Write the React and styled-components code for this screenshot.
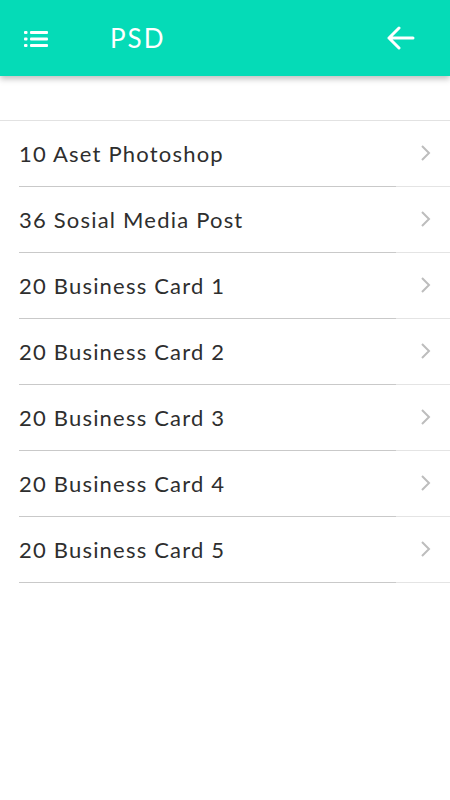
import React from 'react'
import styled, { createGlobalStyle } from 'styled-components'

const items = [
  '10 Aset Photoshop',
  '36 Sosial Media Post',
  '20 Business Card 1',
  '20 Business Card 2',
  '20 Business Card 3',
  '20 Business Card 4',
  '20 Business Card 5',
]

const App = () => {
  return (
    <Page>
      <Global />
      <Header>
        <IconButton aria-label="menu">
          <svg width="26" height="16" viewBox="0 0 26 16">
            <g fill="#fff">
              <rect x="0" y="0" width="3.5" height="3" rx="1" />
              <rect x="0" y="6.5" width="3.5" height="3" rx="1" />
              <rect x="0" y="13" width="3.5" height="3" rx="1" />
              <rect x="6" y="0" width="18" height="3" rx="1" />
              <rect x="6" y="6.5" width="18" height="3" rx="1" />
              <rect x="6" y="13" width="18" height="3" rx="1" />
            </g>
          </svg>
        </IconButton>
        <Title>PSD</Title>
        <BackButton aria-label="back">
          <svg width="30" height="24" viewBox="0 0 30 24">
            <path d="M27 12H3M13 2L3 12l10 10" fill="none" stroke="#fff" strokeWidth="3" strokeLinecap="round" strokeLinejoin="round" />
          </svg>
        </BackButton>
      </Header>
      <List>
        {items.map(label => (
          <Row key={label}>
            <Label>{label}</Label>
            <Chevron width="12" height="18" viewBox="0 0 12 18">
              <path d="M2 2l7 7-7 7" fill="none" stroke="#bdbdbd" strokeWidth="2" />
            </Chevron>
          </Row>
        ))}
      </List>
    </Page>
  )
}

const Global = createGlobalStyle`
  body {
    margin: 0;
    background: #fff;
    font-family: Lato, "Noto Sans", sans-serif;
  }
`

const Page = styled.div`
  width: 450px;
  min-height: 800px;
  background: #fff;
`

const Header = styled.header`
  height: 76px;
  background: #05dbb7;
  display: flex;
  align-items: center;
  padding: 0 34px 0 24px;
  box-shadow: 0 3px 6px rgba(0, 0, 0, 0.25);
`

const IconButton = styled.div`
  display: flex;
  align-items: center;
  margin-top: 2px;
`

const Title = styled.h1`
  margin: 0 0 0 60px;
  font-family: Lato, "Noto Sans", sans-serif;
  font-weight: 400;
  font-size: 26px;
  letter-spacing: 2px;
  color: #fff;
  flex: 1;
`

const BackButton = styled.div`
  display: flex;
  align-items: center;
`

const List = styled.ul`
  list-style: none;
  margin: 44px 0 0;
  padding: 0;
  border-top: 1px solid #e2e2e2;
`

const Row = styled.li`
  height: 66px;
  box-sizing: border-box;
  display: flex;
  align-items: center;
  padding: 0 18px 2px 19px;
  background-image: linear-gradient(90deg, transparent 0 19px, #c9c9c9 19px 396px, #e4e4e4 396px);
  background-size: 100% 1px;
  background-position: bottom;
  background-repeat: no-repeat;
`

const Label = styled.span`
  flex: 1;
  font-size: 22px;
  color: #2e2e2e;
  letter-spacing: 1.2px;
`

const Chevron = styled.svg`
  flex: none;
`

export default App
